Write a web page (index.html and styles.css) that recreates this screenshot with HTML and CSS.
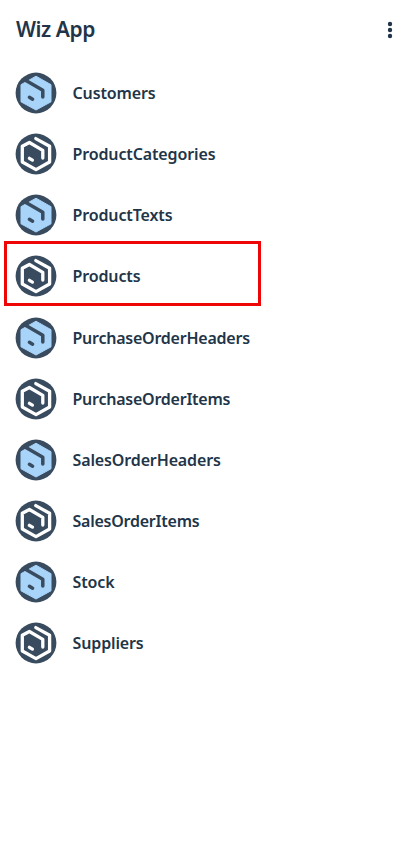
FILE: index.html
```html
<!DOCTYPE html>
<html lang="en">
<head>
<meta charset="utf-8">
<title>Wiz App</title>
<link rel="stylesheet" href="styles.css">
</head>
<body>
<svg class="defs" width="0" height="0" aria-hidden="true">
  <symbol id="solid" viewBox="0 0 42 42">
    <circle cx="21" cy="21" r="20.4" fill="#394b5f"/>
    <path d="M21 4.2 36 12.7V29.8L21 38 6 29.8V12.7Z" fill="#a9d4fa" stroke="#a9d4fa" stroke-linejoin="round"/>
    <path d="M10.5 8.2 27.8 18.2V25M14.4 25.3 17.6 27.2" fill="none" stroke="#394b5f" stroke-width="3.5" stroke-linecap="round" stroke-linejoin="round"/>
  </symbol>
  <symbol id="line" viewBox="0 0 42 42">
    <circle cx="21" cy="21" r="20.4" fill="#394b5f"/>
    <path d="M20.8 5.6 34.6 13.3V29L21 36.6 7.3 29V13.3L14.4 9.5 27.8 17.4V25M14.4 25.3 17.4 27.1" fill="none" stroke="#fff" stroke-width="3.3" stroke-linecap="round" stroke-linejoin="round"/>
  </symbol>
</svg>
<header class="bar">
  <h1 class="title">Wiz App</h1>
  <svg class="more" width="6" height="18" viewBox="0 0 6 18"><circle cx="3" cy="3" r="2.2"/><circle cx="3" cy="9" r="2.2"/><circle cx="3" cy="15" r="2.2"/></svg>
</header>
<ul class="list">
  <li class="row"><svg class="icon"><use href="#solid"/></svg><span>Customers</span></li>
  <li class="row"><svg class="icon"><use href="#line"/></svg><span>ProductCategories</span></li>
  <li class="row"><svg class="icon"><use href="#solid"/></svg><span>ProductTexts</span></li>
  <li class="row marked"><svg class="icon"><use href="#line"/></svg><span>Products</span></li>
  <li class="row tight"><svg class="icon"><use href="#solid"/></svg><span>PurchaseOrderHeaders</span></li>
  <li class="row tight"><svg class="icon"><use href="#line"/></svg><span>PurchaseOrderItems</span></li>
  <li class="row"><svg class="icon"><use href="#solid"/></svg><span>SalesOrderHeaders</span></li>
  <li class="row tight"><svg class="icon"><use href="#line"/></svg><span>SalesOrderItems</span></li>
  <li class="row"><svg class="icon"><use href="#solid"/></svg><span>Stock</span></li>
  <li class="row"><svg class="icon"><use href="#line"/></svg><span>Suppliers</span></li>
</ul>
</body>
</html>
```
FILE: styles.css
```css
body {
  margin: 0;
  min-height: 852px;
  background: #fff;
  color: #223548;
  font-family: "Noto Sans", sans-serif;
}
.defs { display: block; }
.bar {
  display: flex;
  align-items: center;
  justify-content: space-between;
  height: 60px;
  padding: 0 23px 0 16px;
}
.title {
  margin: 0;
  padding-bottom: 2px;
  font-size: 21px;
  font-weight: 600;
  line-height: 28px;
  letter-spacing: -0.45px;
}
.more { fill: #223548; }
.list {
  margin: 0;
  padding: 2.5px 0 0;
  list-style: none;
}
.row {
  position: relative;
  display: flex;
  align-items: center;
  gap: 15.5px;
  height: 61.15px;
  padding-left: 15px;
  font-size: 16px;
  font-weight: 600;
  letter-spacing: -0.13px;
}
.tight { letter-spacing: -0.24px; }
.icon {
  width: 42px;
  height: 42px;
}
.marked::after {
  content: "";
  position: absolute;
  left: 3.6px;
  top: -5px;
  box-sizing: border-box;
  width: 257.4px;
  height: 65px;
  border: 3px solid #ee0505;
}
```
